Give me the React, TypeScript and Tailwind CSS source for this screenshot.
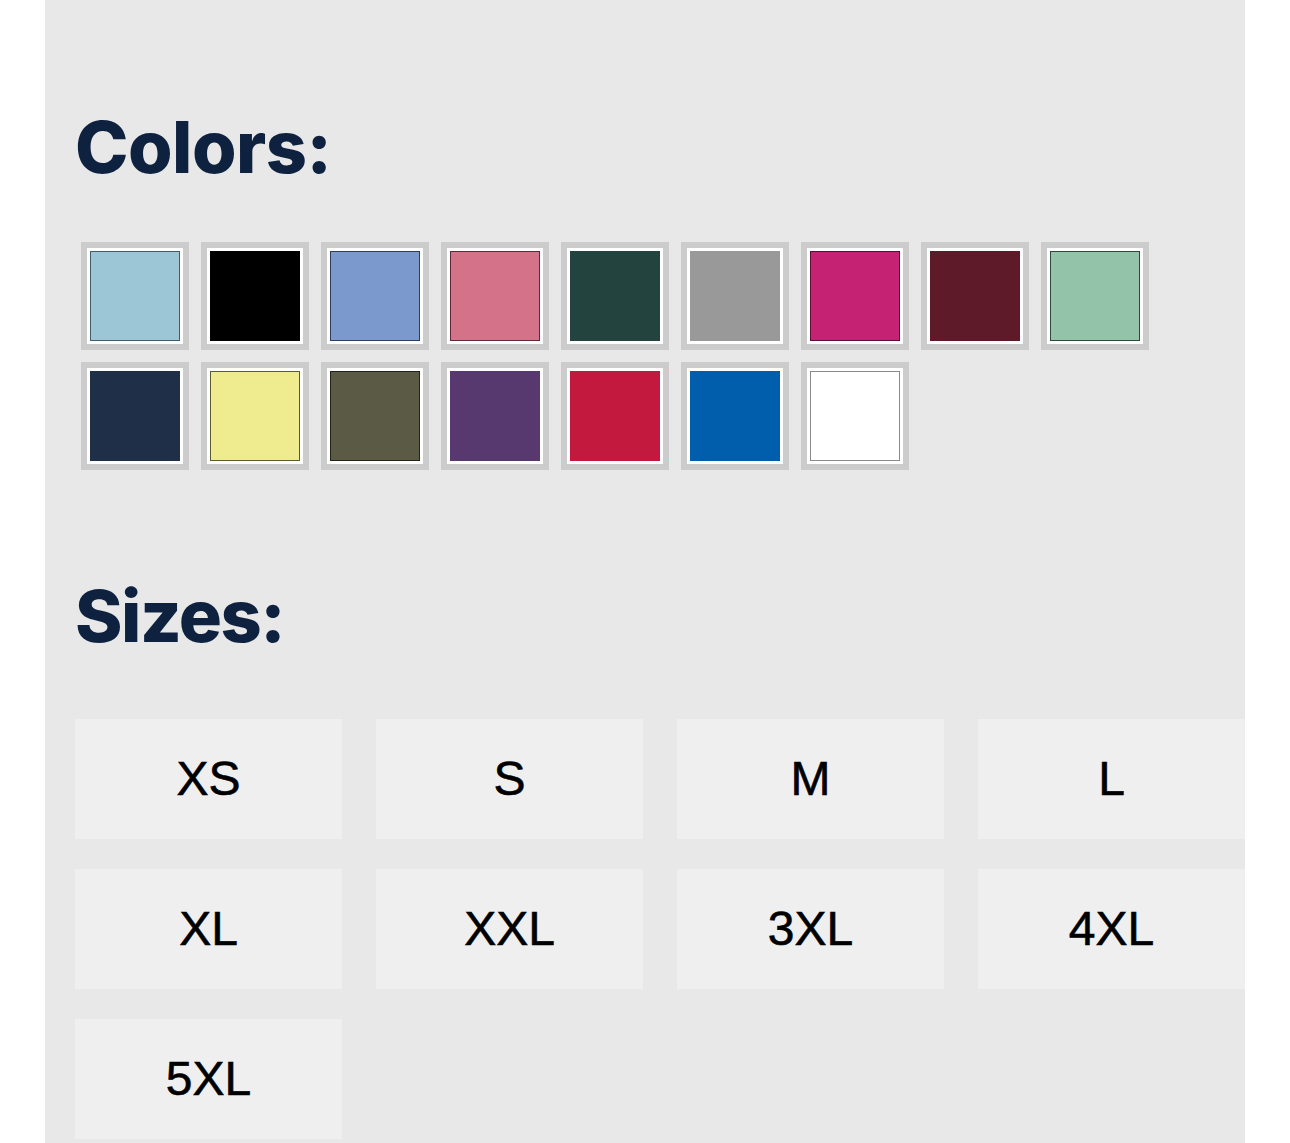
import React from "react";

type Swatch = { c: string; ring?: string };

const swatches: Swatch[] = [
  { c: "#9cc5d6", ring: "#3f5d66" },
  { c: "#000000" },
  { c: "#7b99cd", ring: "#2e3d5c" },
  { c: "#d4728a", ring: "#5e2a36" },
  { c: "#23443e" },
  { c: "#999999" },
  { c: "#c52274", ring: "#5a1034" },
  { c: "#5e1a28" },
  { c: "#93c3a9", ring: "#30483b" },
  { c: "#1f2f48" },
  { c: "#eeec8e", ring: "#5a5930" },
  { c: "#5b5a45", ring: "#23231a" },
  { c: "#57386f" },
  { c: "#c3193f" },
  { c: "#005eac" },
  { c: "#ffffff", ring: "#8a8a8a" },
];

const sizes = ["XS", "S", "M", "L", "XL", "XXL", "3XL", "4XL", "5XL"];

export default function App() {
  return (
    <div className="min-h-[1143px] bg-white">
      <div className="ml-[45px] w-[1200px] min-h-[1143px] bg-[#e8e8e8] pl-[30px] pt-[111px] overflow-hidden">
        <h2
          className="text-[72px] leading-[72px] font-extrabold text-[#0e2240] tracking-[-0.5px]"
          style={{ fontFamily: "Inter, 'Open Sans', sans-serif" }}
        >
          Colors:
        </h2>
        <div className="mt-[59px] ml-[6px] grid grid-cols-[repeat(9,108px)] gap-[12px]">
          {swatches.map((s, i) => (
            <div
              key={i}
              className="w-[108px] h-[108px] border-[6px] border-[#cccccc] bg-white p-[3px]"
            >
              <div
                className="w-[90px] h-[90px]"
                style={{
                  backgroundColor: s.c,
                  boxShadow: s.ring ? `inset 0 0 0 1px ${s.ring}` : undefined,
                }}
              />
            </div>
          ))}
        </div>
        <h2
          className="mt-[110px] text-[72px] leading-[72px] font-extrabold text-[#0e2240] tracking-[-1.5px]"
          style={{ fontFamily: "Inter, 'Open Sans', sans-serif" }}
        >
          Sizes:
        </h2>
        <div className="mt-[67px] w-[1170px] grid grid-cols-4 gap-x-[34px] gap-y-[30px]">
          {sizes.map((s) => (
            <div
              key={s}
              className="h-[120px] bg-[#efefef] flex items-center justify-center text-[48px] text-black [-webkit-text-stroke:0.6px_black]"
              style={{ fontFamily: "'Liberation Sans', Arial, sans-serif" }}
            >
              {s}
            </div>
          ))}
        </div>
      </div>
    </div>
  );
}
